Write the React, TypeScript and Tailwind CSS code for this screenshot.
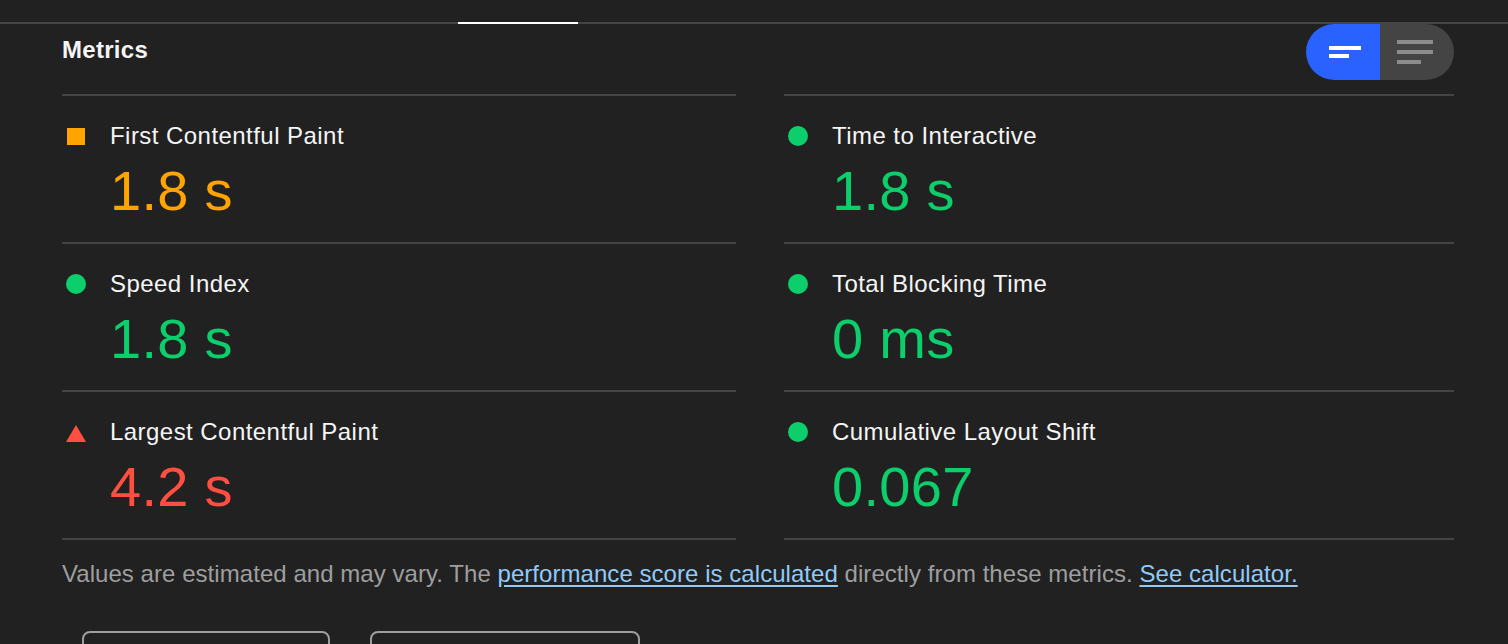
import React from "react";

type Metric = { label: string; value: string; status: "pass" | "average" | "fail" };

const left: Metric[] = [
  { label: "First Contentful Paint", value: "1.8 s", status: "average" },
  { label: "Speed Index", value: "1.8 s", status: "pass" },
  { label: "Largest Contentful Paint", value: "4.2 s", status: "fail" },
];

const right: Metric[] = [
  { label: "Time to Interactive", value: "1.8 s", status: "pass" },
  { label: "Total Blocking Time", value: "0 ms", status: "pass" },
  { label: "Cumulative Layout Shift", value: "0.067", status: "pass" },
];

function Icon({ status }: { status: Metric["status"] }) {
  if (status === "pass") return <div className="w-5 h-5 rounded-full bg-[#0cce6b]" />;
  if (status === "average") return <div className="w-[18px] h-[17px] bg-[#ffa400]" />;
  return (
    <svg width="20" height="18" viewBox="0 0 20 18" className="mt-[3px]">
      <polygon points="10,0 20,17 0,17" fill="#ff4e42" />
    </svg>
  );
}

function valueColor(s: Metric["status"]) {
  if (s === "pass") return "text-[#0cce6b]";
  if (s === "average") return "text-[#ffa400]";
  return "text-[#ff4e42]";
}

function MetricRow({ m, last }: { m: Metric; last: boolean }) {
  return (
    <div className={"border-t-2 border-[#444444] pt-[26px] pb-[19px] " + (last ? "border-b-2" : "")}>
      <div className="flex items-center h-7">
        <div className="w-7 flex justify-center items-center">
          <Icon status={m.status} />
        </div>
        <div className="ml-5 text-[24px] leading-7 tracking-[0.45px] text-[#f5f5f5]">{m.label}</div>
      </div>
      <div className={"ml-12 mt-[9px] text-[56px] leading-[64px] tracking-[0.3px] " + valueColor(m.status)}>
        {m.value}
      </div>
    </div>
  );
}

export default function App() {
  return (
    <div className="w-[1508px] min-h-[644px] bg-[#212121] font-['Liberation_Sans',Arial,sans-serif] overflow-hidden">
      <div className="h-[22px]" />
      <div className="flex h-[2px] bg-[#444444]">
        <div className="w-[458px]" />
        <div className="w-[120px] bg-white" />
      </div>
      <div className="mx-[62px] w-[1392px]">
        <div className="flex justify-between items-start h-[70px]">
          <div className="mt-[14px] text-[24px] leading-6 font-bold tracking-[0.3px] text-[#f5f5f5]">Metrics</div>
          <div className="flex h-14 w-[148px] rounded-full overflow-hidden">
            <div className="w-[74px] bg-[#2962ff] flex items-center justify-center pl-[4px]">
              <svg width="32" height="12" viewBox="0 0 32 12">
                <rect x="0" y="0" width="32" height="4" fill="#ffffff" />
                <rect x="0" y="8" width="20" height="4" fill="#ffffff" />
              </svg>
            </div>
            <div className="w-[74px] bg-[#444444] flex items-center justify-center pr-[4px]">
              <svg width="36" height="24" viewBox="0 0 36 24">
                <rect x="0" y="0" width="36" height="4" fill="#8c8c8c" />
                <rect x="0" y="10" width="36" height="4" fill="#8c8c8c" />
                <rect x="0" y="20" width="24" height="4" fill="#8c8c8c" />
              </svg>
            </div>
          </div>
        </div>
        <div className="grid grid-cols-[674px_670px] gap-x-12">
          <div>
            {left.map((m, i) => (
              <MetricRow key={m.label} m={m} last={i === left.length - 1} />
            ))}
          </div>
          <div>
            {right.map((m, i) => (
              <MetricRow key={m.label} m={m} last={i === right.length - 1} />
            ))}
          </div>
        </div>
        <div className="mt-[16px] text-[24px] leading-9 tracking-[0.05px] text-[#9e9e9e]">
          Values are estimated and may vary. The{" "}
          <a className="text-[#90caf9] underline underline-offset-[3px]">performance score is calculated</a>{" "}
          directly from these metrics.{" "}
          <a className="text-[#90caf9] underline underline-offset-[3px]">See calculator.</a>
        </div>
        <div className="flex gap-10 ml-5 mt-[39px]">
          <div className="w-[248px] h-[80px] border-2 border-[#9e9e9e] rounded-lg" />
          <div className="w-[270px] h-[80px] border-2 border-[#9e9e9e] rounded-lg" />
        </div>
      </div>
    </div>
  );
}
